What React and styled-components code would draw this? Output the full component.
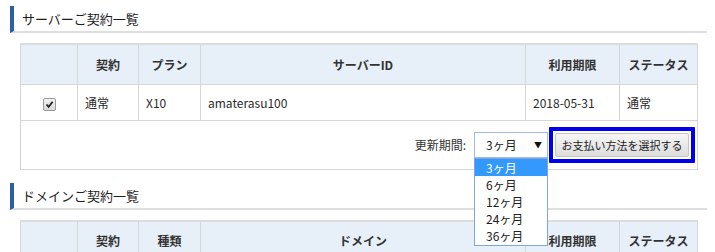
import React from 'react'
import styled, { createGlobalStyle } from 'styled-components'

const Global = createGlobalStyle`
  html, body { margin: 0; padding: 0; background: #fff; overflow: hidden; }
  body {
    font-family: "Noto Sans CJK JP", "Noto Sans", sans-serif;
    font-size: 12px;
    color: #333;
  }
`

const Page = styled.div`
  width: 715px;
  height: 252px;
  padding: 6px 8px 0 10px;
  box-sizing: border-box;
  overflow: hidden;
`

const Section = styled.section`
  margin-bottom: 13px;
`

const Heading = styled.h2`
  margin: 0;
  height: 25px;
  display: flex;
  align-items: center;
  padding-left: 8px;
  border-left: 4px solid #2b5fa6;
  border-bottom: 2px solid #dedede;
  font-size: 13px;
  font-weight: normal;
  color: #1e1e1e;
  box-sizing: content-box;
`

const Table = styled.table`
  margin: 10px 10px 0 10px;
  width: 677px;
  table-layout: fixed;
  border-collapse: collapse;
  border-top: 2px solid #dcdcdc;
`

const Th = styled.th`
  height: 40px;
  box-sizing: border-box;
  padding: 0;
  background: #e7eff8;
  border: 1px solid #d6d6d6;
  border-top: none;
  font-weight: bold;
  font-size: 12px;
  color: #333;
  text-align: center;
`

const Td = styled.td`
  height: 36px;
  box-sizing: border-box;
  padding: 0 7px;
  border: 1px solid #d6d6d6;
  background: #fff;
  color: #2a2a2a;
  text-align: ${p => (p.$center ? 'center' : 'left')};
`

const FooterCell = styled.td`
  height: 49px;
  box-sizing: border-box;
  padding: 0 2px 0 0;
  border: 1px solid #d6d6d6;
  background: #fff;
`

const FooterBar = styled.div`
  display: flex;
  justify-content: flex-end;
  align-items: center;
  gap: 8px;
`

const Label = styled.span`
  color: #333;
`

const SelectWrap = styled.div`
  position: relative;
  width: 74px;
`

const SelectBox = styled.div`
  height: 26px;
  box-sizing: border-box;
  border: 1px solid #9fbbe4;
  background: #fff;
  display: flex;
  align-items: center;
  justify-content: space-between;
  padding: 0 5px 0 11px;
  font-size: 12px;
  color: #222;
`

const Arrow = styled.span`
  font-size: 8px;
  color: #111;
`

const OptionList = styled.ul`
  position: absolute;
  top: 26px;
  left: 0;
  width: 74px;
  box-sizing: border-box;
  margin: 0;
  padding: 0 0 1px;
  list-style: none;
  background: #fff;
  border: 1px solid #7fa6dd;
  z-index: 5;
`

const Option = styled.li`
  height: 17px;
  line-height: 17px;
  padding-left: 11px;
  font-size: 12px;
  color: ${p => (p.$active ? '#fff' : '#222')};
  background: ${p => (p.$active ? '#3399ff' : 'transparent')};
`

const Frame = styled.div`
  padding: 2px;
  border: 4px solid #0000ee;
  border-radius: 1px;
  background: #fff;
  margin-left: -7px;
`

const PayButton = styled.button`
  display: block;
  height: 24px;
  width: 134px;
  padding: 0;
  font-family: inherit;
  font-size: 11px;
  color: #222;
  border: 1px solid #c4c4c4;
  border-radius: 2px;
  background: linear-gradient(#f6f6f6, #dddddd);
`

const Check = styled.span`
  display: inline-flex;
  width: 11px;
  height: 11px;
  border: 1px solid #9a9a9a;
  border-radius: 2px;
  background: linear-gradient(#f2f2f2, #d9d9d9);
  align-items: center;
  justify-content: center;
  vertical-align: middle;
`

const cols = [57, 61, 62, 325, 94, 78]

function Cols() {
  return (
    <colgroup>
      {cols.map((w, i) => <col key={i} style={{ width: w }} />)}
    </colgroup>
  )
}

export default function App() {
  return (
    <>
      <Global />
      <Page>
        <Section>
          <Heading>サーバーご契約一覧</Heading>
          <Table>
            <Cols />
            <thead>
              <tr>
                <Th />
                <Th>契約</Th>
                <Th>プラン</Th>
                <Th>サーバーID</Th>
                <Th>利用期限</Th>
                <Th>ステータス</Th>
              </tr>
            </thead>
            <tbody>
              <tr>
                <Td $center>
                  <Check>
                    <svg width="9" height="9" viewBox="0 0 9 9">
                      <path d="M1.5 4.5 L3.6 6.8 L7.6 1.8" fill="none" stroke="#222" strokeWidth="1.8" />
                    </svg>
                  </Check>
                </Td>
                <Td>通常</Td>
                <Td>X10</Td>
                <Td>amaterasu100</Td>
                <Td>2018-05-31</Td>
                <Td>通常</Td>
              </tr>
              <tr>
                <FooterCell colSpan={6}>
                  <FooterBar>
                    <Label>更新期間:</Label>
                    <SelectWrap>
                      <SelectBox>
                        <span>3ヶ月</span>
                        <Arrow>▼</Arrow>
                      </SelectBox>
                      <OptionList>
                        <Option $active>3ヶ月</Option>
                        <Option>6ヶ月</Option>
                        <Option>12ヶ月</Option>
                        <Option>24ヶ月</Option>
                        <Option>36ヶ月</Option>
                      </OptionList>
                    </SelectWrap>
                    <Frame>
                      <PayButton>お支払い方法を選択する</PayButton>
                    </Frame>
                  </FooterBar>
                </FooterCell>
              </tr>
            </tbody>
          </Table>
        </Section>
        <Section>
          <Heading>ドメインご契約一覧</Heading>
          <Table>
            <Cols />
            <thead>
              <tr>
                <Th />
                <Th>契約</Th>
                <Th>種類</Th>
                <Th>ドメイン</Th>
                <Th>利用期限</Th>
                <Th>ステータス</Th>
              </tr>
            </thead>
          </Table>
        </Section>
      </Page>
    </>
  )
}
